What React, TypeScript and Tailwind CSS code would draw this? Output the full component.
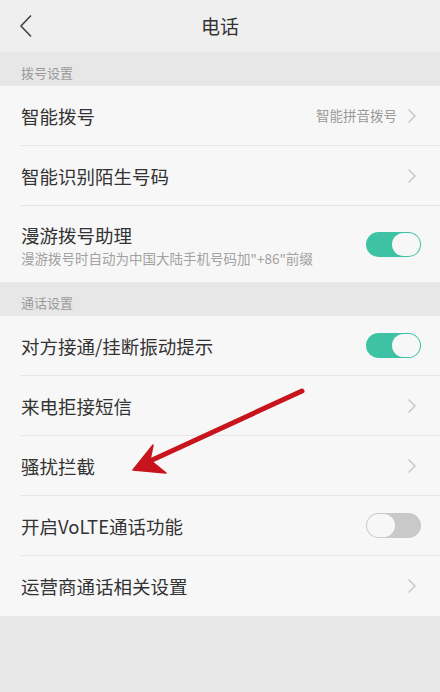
import React from "react";

const FONT = { fontFamily: '"Noto Sans CJK SC", "Noto Sans", sans-serif' };

function Chevron() {
  return (
    <svg width="10" height="16" viewBox="0 0 10 16" className="shrink-0">
      <path d="M1.5 1.5 L8 8 L1.5 14.5" fill="none" stroke="#c4c4c4" strokeWidth="1.3" />
    </svg>
  );
}

function Toggle({ on }: { on: boolean }) {
  return on ? (
    <div className="w-[55px] h-[25px] rounded-full bg-[#3dc3a3] flex items-center justify-end pr-[1px]">
      <div className="w-[28px] h-[23px] rounded-full bg-[#f7f7f7]" />
    </div>
  ) : (
    <div className="w-[55px] h-[25px] rounded-full bg-[#c9c9c9] flex items-center pl-[1px]">
      <div className="w-[28px] h-[23px] rounded-full bg-[#f7f7f7]" />
    </div>
  );
}

function Section({ title, h }: { title: string; h: string }) {
  return (
    <div className={`${h} bg-[#e7e7e7] flex items-center pt-[8px] px-[21px] text-[13px] text-[#9a9a9a]`}>{title}</div>
  );
}

function Row({
  title,
  sub,
  right,
  toggle,
  last,
  h = "h-[60px]",
}: {
  title: string;
  sub?: string;
  right?: string;
  toggle?: boolean;
  last?: boolean;
  h?: string;
}) {
  return (
    <div className="bg-[#f7f7f7] pl-[21px]">
      <div className={`${h} flex items-center pr-[19px] ${last ? "" : "border-b border-[#e4e4e4]"}`}>
        <div className="flex-1 flex flex-col">
          <span className="text-[18.5px] text-[#333333] leading-[26px]">{title}</span>
          {sub && <span className="text-[13.5px] text-[#a2a2a2] leading-[18px] mt-[1px]">{sub}</span>}
        </div>
        {right && <span className="text-[13.5px] text-[#9a9a9a] mr-[10px]">{right}</span>}
        {toggle === undefined ? <div className="pr-[4px]"><Chevron /></div> : <Toggle on={toggle} />}
      </div>
    </div>
  );
}

export default function App() {
  return (
    <div className="relative w-[440px] h-[692px] bg-[#e7e7e7] overflow-hidden" style={FONT}>
      {/* Header */}
      <div className="h-[52px] bg-[#efefef] flex items-center relative">
        <svg width="14" height="24" viewBox="0 0 14 24" className="ml-[19px]">
          <path d="M12 1.5 L2 12 L12 22.5" fill="none" stroke="#444" strokeWidth="1.6" />
        </svg>
        <span className="absolute left-1/2 -translate-x-1/2 text-[19px] text-[#333]">电话</span>
      </div>

      <Section title="拨号设置" h="h-[34px]" />
      <Row title="智能拨号" right="智能拼音拨号" />
      <Row title="智能识别陌生号码" />
      <Row title="漫游拨号助理" sub={'漫游拨号时自动为中国大陆手机号码加"+86"前缀'} toggle={true} last h="h-[76px]" />

      <Section title="通话设置" h="h-[34px]" />
      <Row title="对方接通/挂断振动提示" toggle={true} />
      <Row title="来电拒接短信" />
      <Row title="骚扰拦截" />
      <Row title="开启VoLTE通话功能" toggle={false} />
      <Row title="运营商通话相关设置" last />

      {/* Red arrow annotation */}
      <svg className="absolute left-0 top-0 pointer-events-none" width="440" height="692">
        <line x1="302" y1="391" x2="150" y2="461" stroke="#c8141c" strokeWidth="5" strokeLinecap="round" />
        <path d="M133 470 L153 445 L150 460 L166 473 Z" fill="#c8141c" stroke="#c8141c" strokeWidth="1.5" strokeLinejoin="round" />
      </svg>
    </div>
  );
}
